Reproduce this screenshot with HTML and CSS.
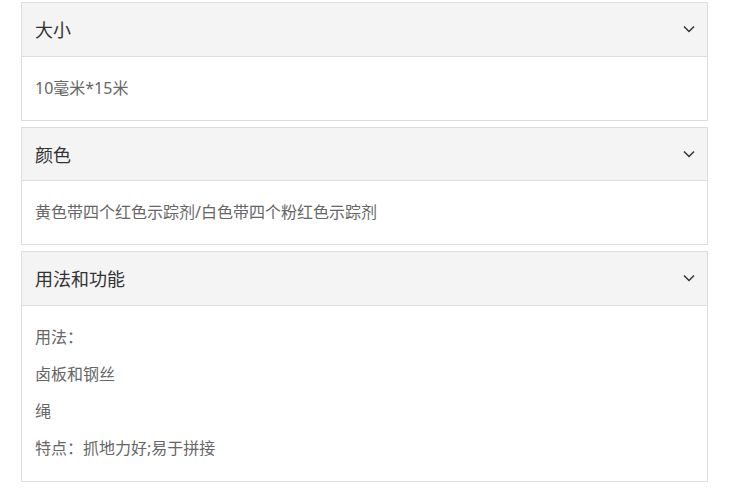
FILE: index.html
```html
<!DOCTYPE html>
<html lang="zh-CN">
<head>
    <meta charset="UTF-8">
    <meta name="viewport" content="width=device-width, initial-scale=1.0">
    <title>产品参数</title>
    <link rel="stylesheet" href="styles.css">
</head>
<body>
    <div class="specs">
        <div class="panel">
            <div class="panel-head">
                <span>大小</span>
                <svg class="chevron" width="12" height="8" viewBox="0 0 12 8"><path d="M1 1.5 L6 6.5 L11 1.5" fill="none" stroke="#333" stroke-width="1.5"/></svg>
            </div>
            <div class="panel-body">
                <p>10毫米*15米</p>
            </div>
        </div>

        <div class="panel">
            <div class="panel-head">
                <span>颜色</span>
                <svg class="chevron" width="12" height="8" viewBox="0 0 12 8"><path d="M1 1.5 L6 6.5 L11 1.5" fill="none" stroke="#333" stroke-width="1.5"/></svg>
            </div>
            <div class="panel-body">
                <p>黄色带四个红色示踪剂/白色带四个粉红色示踪剂</p>
            </div>
        </div>

        <div class="panel">
            <div class="panel-head">
                <span>用法和功能</span>
                <svg class="chevron" width="12" height="8" viewBox="0 0 12 8"><path d="M1 1.5 L6 6.5 L11 1.5" fill="none" stroke="#333" stroke-width="1.5"/></svg>
            </div>
            <div class="panel-body">
                <p>用法：</p>
                <p>卤板和钢丝</p>
                <p>绳</p>
                <p>特点：抓地力好;易于拼接</p>
            </div>
        </div>
    </div>
</body>
</html>
```

FILE: styles.css
```css
body {
    margin: 0;
    padding: 2px 28px 0 21px;
    background-color: #ffffff;
    font-family: "Microsoft YaHei", "Noto Sans", "Noto Sans CJK SC", sans-serif;
}

.specs {
    display: flex;
    flex-direction: column;
    gap: 5.75px;
}

.panel {
    border: 1px solid #dddddd;
}

.panel-head {
    display: flex;
    justify-content: space-between;
    align-items: center;
    height: 52.5px;
    padding: 0 12px 0 13px;
    background-color: #f4f4f4;
    border-bottom: 1px solid #dddddd;
    font-size: 18px;
    color: #333333;
}

.chevron {
    display: block;
}

.panel-body {
    padding: 13px 13px;
    font-size: 16px;
    color: #666666;
}

.panel-body p {
    margin: 0;
    line-height: 37.25px;
}
```
